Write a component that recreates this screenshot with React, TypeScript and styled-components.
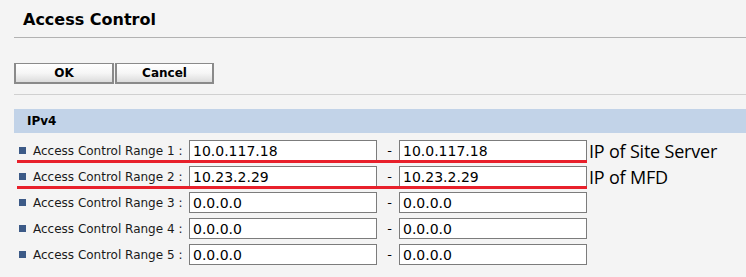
import React from 'react';
import styled, { createGlobalStyle } from 'styled-components';

const ranges = [
    { from: '10.0.117.18', to: '10.0.117.18', note: 'IP of Site Server', marked: true },
    { from: '10.23.2.29', to: '10.23.2.29', note: 'IP of MFD', marked: true },
    { from: '0.0.0.0', to: '0.0.0.0' },
    { from: '0.0.0.0', to: '0.0.0.0' },
    { from: '0.0.0.0', to: '0.0.0.0' },
];

const GlobalStyle = createGlobalStyle`
    html, body {
        margin: 0;
        padding: 0;
        background: #f4f4f4;
    }
    body {
        font-family: 'DejaVu Sans', Verdana, sans-serif;
        color: #000;
    }
`;

export default function App() {
    return (
        <>
            <GlobalStyle />
            <Page>
                <Header>
                    <Title>Access Control</Title>
                </Header>
                <ButtonBar>
                    <FormButton>OK</FormButton>
                    <FormButton>Cancel</FormButton>
                </ButtonBar>
                <SectionHead>IPv4</SectionHead>
                <Rows>
                    {ranges.map((r, i) => (
                        <Row key={i} $marked={!!r.marked}>
                            <Bullet />
                            <Label>Access Control Range {i + 1} :</Label>
                            <AddressInput readOnly value={r.from} />
                            <Dash>-</Dash>
                            <AddressInput readOnly value={r.to} />
                            {r.note && <Note>{r.note}</Note>}
                        </Row>
                    ))}
                </Rows>
            </Page>
        </>
    );
}

const Page = styled.div`
    padding-left: 14px;
    min-height: 277px;
    box-sizing: border-box;
`;
const Header = styled.div`
    height: 38px;
    box-sizing: border-box;
    padding: 10px 0 0 9px;
    border-bottom: 1px solid #b2b2b2;
`;
const Title = styled.h1`
    margin: 0;
    font-size: 16px;
    font-weight: bold;
    line-height: 20px;
`;
const ButtonBar = styled.div`
    display: flex;
    padding: 25px 0 10px;
    border-bottom: 1px solid #d0d0d0;
`;
const FormButton = styled.button`
    width: 100px;
    height: 21px;
    margin: 0 1px 0 0;
    padding: 0;
    box-sizing: border-box;
    border: 2px solid #8a8a8a;
    border-top-width: 1px;
    background: linear-gradient(#ffffff 0%, #f6f6f6 50%, #dcdcdc 100%);
    font-family: 'DejaVu Sans', Verdana, sans-serif;
    font-size: 12px;
    font-weight: bold;
    color: #000;
    &:last-child {
        width: 99px;
    }
`;
const SectionHead = styled.div`
    margin-top: 14px;
    height: 24px;
    line-height: 24px;
    padding-left: 13px;
    background: #c2d3e8;
    font-size: 12px;
    font-weight: bold;
`;
const Rows = styled.div`
    display: flex;
    flex-direction: column;
    gap: 5px;
    padding-top: 7px;
`;
const Row = styled.div<{ $marked: boolean }>`
    position: relative;
    display: flex;
    align-items: center;
    height: 21px;
    &::after {
        content: '';
        display: ${(p) => (p.$marked ? 'block' : 'none')};
        position: absolute;
        left: 3px;
        width: 570px;
        bottom: -2px;
        height: 3px;
        background: #e8202b;
    }
`;
const Bullet = styled.span`
    width: 7px;
    height: 7px;
    margin: 0 7px 0 5px;
    background: #3c5a87;
    flex: none;
`;
const Label = styled.span`
    width: 156px;
    font-size: 12px;
    color: #1a1a1a;
    white-space: nowrap;
`;
const AddressInput = styled.input`
    width: 188px;
    height: 21px;
    box-sizing: border-box;
    margin: 0;
    padding: 0 3px;
    border: 1px solid #7c7c7c;
    background: #fff;
    font-family: 'DejaVu Sans', Verdana, sans-serif;
    font-size: 14px;
    color: #000;
    outline: none;
`;
const Dash = styled.span`
    width: 22px;
    padding-left: 3px;
    box-sizing: border-box;
    text-align: center;
    font-size: 13px;
`;
const Note = styled.span`
    margin-left: 2px;
    font-family: 'Open Sans', 'Noto Sans', sans-serif;
    font-size: 18px;
    letter-spacing: -0.2px;
    white-space: nowrap;
`;
